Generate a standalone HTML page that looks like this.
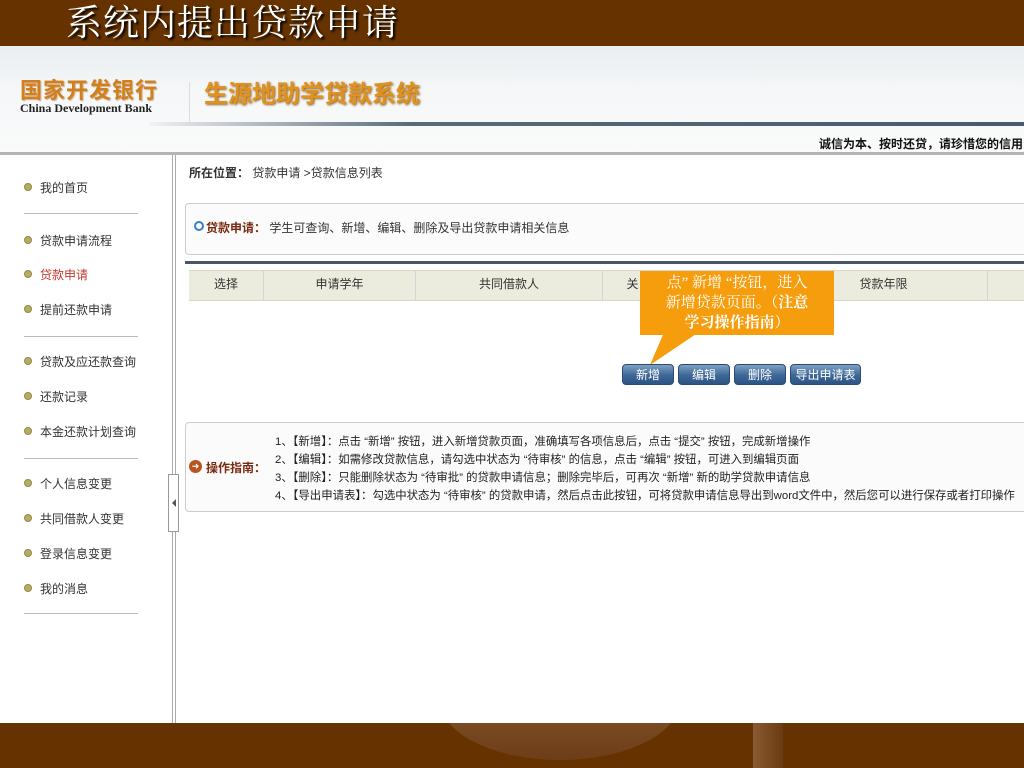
<!DOCTYPE html>
<html><head><meta charset="utf-8"><style>
*{margin:0;padding:0;box-sizing:border-box}
body{width:1024px;height:768px;overflow:hidden;position:relative;background:#fff;font-family:"Liberation Sans","Noto Sans CJK SC",sans-serif;font-size:12px;color:#333}
.abs{position:absolute}
.top{left:0;top:0;width:1024px;height:46px;background:#663300}
.title{left:66px;top:2px;font-family:"Liberation Serif","Noto Serif CJK SC",serif;font-size:36px;color:#fff;text-shadow:2px 2px 2px #000;letter-spacing:1px;line-height:42px}
.hdr{left:0;top:46px;width:1024px;height:109px;background:linear-gradient(180deg,#e9eef0 0%,#f5f7f8 40%,#fafbfb 100%)}
.side li{list-style:none;position:absolute;left:24px;font-size:12px;color:#333}
.side li:before{content:"";display:inline-block;width:6px;height:6px;border-radius:50%;background:#b8ad5c;border:1px solid #8f8a50;margin-right:8px;vertical-align:1px}
.sep{left:24px;width:114px;height:1px;background:#bbb}
.btn{position:absolute;top:364px;height:21px;border-radius:4px;background:linear-gradient(#7fa0c3,#3d6797 55%,#2c5584);color:#fff;font-size:12px;text-align:center;line-height:21px;border:1px solid #2b4c74}
.th{position:absolute;top:271px;height:29px;line-height:27px;text-align:center;font-size:12px;color:#333;border-right:1px solid #d5d5d5}
</style></head><body>
<div class="abs top"></div>
<div class="abs title">系统内提出贷款申请</div>
<div class="abs hdr"></div>
<div class="abs" style="left:20px;top:79px;font-size:22px;line-height:24px;font-weight:bold;color:#d2801d;letter-spacing:1px;text-shadow:1px 1px 1px #a0602080">国家开发银行</div>
<div class="abs" style="left:20px;top:102px;font-family:'Liberation Serif',serif;font-size:12px;line-height:13px;font-weight:bold;color:#222">China Development Bank</div>
<div class="abs" style="left:189px;top:82px;width:1px;height:42px;background:#d8dde0"></div>
<div class="abs" style="left:204px;top:80px;font-size:24px;line-height:30px;font-weight:bold;color:#e0921e;text-shadow:1px 1px 2px #8a5a20">生源地助学贷款系统</div>
<div class="abs" style="left:150px;top:122px;width:874px;height:4px;background:linear-gradient(90deg,#f0f2f3,#5a6a7a 30%,#4a5a6e)"></div>
<div class="abs" style="left:0;top:152px;width:1024px;height:3px;background:#b5b5b5"></div>
<div class="abs" style="left:819px;top:135px;font-size:12px;font-weight:bold;color:#111;white-space:nowrap">诚信为本、按时还贷，请珍惜您的信用</div>
<ul class="side">
<li style="top:179px">我的首页</li>
<li style="top:232px">贷款申请流程</li>
<li style="top:266px;color:#c0392b">贷款申请</li>
<li style="top:301px">提前还款申请</li>
<li style="top:353px">贷款及应还款查询</li>
<li style="top:388px">还款记录</li>
<li style="top:423px">本金还款计划查询</li>
<li style="top:475px">个人信息变更</li>
<li style="top:510px">共同借款人变更</li>
<li style="top:545px">登录信息变更</li>
<li style="top:580px">我的消息</li>
</ul>
<div class="abs sep" style="top:213px"></div>
<div class="abs sep" style="top:336px"></div>
<div class="abs sep" style="top:458px"></div>
<div class="abs sep" style="top:613px"></div>
<div class="abs" style="left:172px;top:155px;width:4px;height:570px;border-left:1px solid #aaa;border-right:1px solid #aaa"></div>
<div class="abs" style="left:168px;top:474px;width:11px;height:58px;background:#fff;border:1px solid #999"></div>
<div class="abs" style="left:172px;top:499px;width:0;height:0;border-top:4px solid transparent;border-bottom:4px solid transparent;border-right:4px solid #555"></div>
<div class="abs" style="left:189px;top:164px;font-size:12px"><b style="color:#333">所在位置：</b> 贷款申请 &gt;贷款信息列表</div>
<div class="abs" style="left:185px;top:203px;width:845px;height:52px;border:1px solid #ccc;border-radius:4px;background:#fbfbfb"></div>
<div class="abs" style="left:194px;top:221px;width:10px;height:10px;border-radius:50%;border:2px solid #3a7fc4"></div>
<div class="abs" style="left:206px;top:219px;font-size:12px"><b style="color:#7a2a10">贷款申请：</b> 学生可查询、新增、编辑、删除及导出贷款申请相关信息</div>
<div class="abs" style="left:185px;top:261px;width:839px;height:3px;background:#4a5766"></div>
<div class="abs" style="left:189px;top:270px;width:835px;height:31px;background:#ececde;border-top:1px solid #d8d8c8;border-bottom:1px solid #d8d8c8"></div>
<div class="th" style="left:189px;width:75px">选择</div>
<div class="th" style="left:264px;width:152px">申请学年</div>
<div class="th" style="left:416px;width:187px">共同借款人</div>
<div class="th" style="left:603px;width:60px">关</div>
<div class="th" style="left:780px;width:208px">贷款年限</div>
<div class="abs" style="left:640px;top:271px;width:194px;height:64px;background:#f59d0c"></div>
<svg class="abs" style="left:640px;top:330px" width="70" height="40"><polygon points="25,0 62,0 10,35" fill="#f59d0c"/></svg>
<div class="abs" style="left:640px;top:273px;width:194px;text-align:center;font-family:'Liberation Serif','Noto Serif CJK SC',serif;font-size:15px;line-height:20px;color:#fff">点” 新增 “按钮，进入<br>新增贷款页面。（<b>注意</b><br><b>学习操作指南</b>）</div>
<div class="btn" style="left:622px;width:52px">新增</div>
<div class="btn" style="left:678px;width:52px">编辑</div>
<div class="btn" style="left:734px;width:52px">删除</div>
<div class="btn" style="left:790px;width:71px">导出申请表</div>
<div class="abs" style="left:185px;top:422px;width:845px;height:90px;border:1px solid #ccc;border-radius:4px;background:#fbfbfb"></div>
<div class="abs" style="left:189px;top:460px;width:13px;height:13px;border-radius:50%;background:#b9541e;color:#fff;font-size:9px;line-height:13px;text-align:center">➜</div>
<div class="abs" style="left:206px;top:459px;font-size:12px;font-weight:bold;color:#7a2a10">操作指南：</div>
<div class="abs" style="left:275px;top:433px;font-size:11.4px;line-height:18px;color:#222;white-space:nowrap">1、【新增】：点击 “新增” 按钮，进入新增贷款页面，准确填写各项信息后，点击 “提交” 按钮，完成新增操作<br>2、【编辑】：如需修改贷款信息，请勾选中状态为 “待审核” 的信息，点击 “编辑” 按钮，可进入到编辑页面<br>3、【删除】：只能删除状态为 “待审批” 的贷款申请信息；删除完毕后，可再次 “新增” 新的助学贷款申请信息<br>4、【导出申请表】：勾选中状态为 “待审核” 的贷款申请，然后点击此按钮，可将贷款申请信息导出到word文件中，然后您可以进行保存或者打印操作</div>
<div class="abs" style="left:0;top:723px;width:1024px;height:45px;background:#663300"></div>
<div class="abs" style="left:440px;top:700px;width:240px;height:60px;border-radius:0 0 120px 120px/0 0 60px 60px;background:linear-gradient(#8a5a30,#6e4020);opacity:.8"></div>
<div class="abs" style="left:440px;top:690px;width:240px;height:33px;background:#fff"></div>
<div class="abs" style="left:753px;top:723px;width:30px;height:45px;background:linear-gradient(90deg,#8a5a32,#6a3a10)"></div>
</body></html>
